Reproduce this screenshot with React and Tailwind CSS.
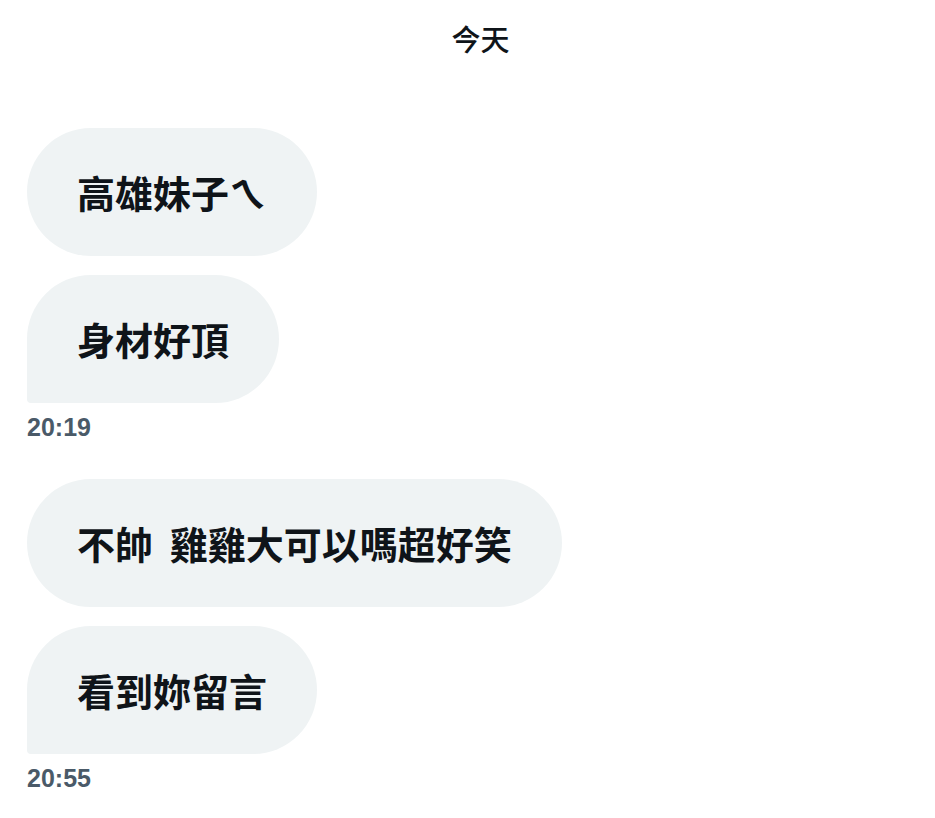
const font = "font-['PingFang_TC','Noto_Sans_CJK_TC',sans-serif]";

function Bubble({ text, last }) {
  return (
    <div className="flex">
      <div
        className={`flex h-[128px] items-center bg-[#eff3f4] px-[50px] text-[38px] font-semibold leading-none text-[#0f1419] [word-spacing:8px] ${
          last ? "rounded-t-[64px] rounded-br-[64px] rounded-bl-[4px]" : "rounded-[64px]"
        }`}
      >
        <span className="whitespace-pre">{text}</span>
      </div>
    </div>
  );
}

function Group({ messages, time }) {
  return (
    <div className="flex flex-col">
      <div className="flex flex-col gap-[19px]">
        {messages.map((m, i) => (
          <Bubble key={i} text={m} last={i === messages.length - 1} />
        ))}
      </div>
      <div className="mt-[9px] font-['Liberation_Sans',sans-serif] text-[25px] font-bold leading-[30px] text-[#4a5a68]">
        {time}
      </div>
    </div>
  );
}

export default function App() {
  return (
    <div className={`min-h-screen bg-white ${font}`}>
      <div className="pl-[26px] pt-[20px] text-center text-[29px] font-medium leading-[36px] text-[#0f1419]">今天</div>
      <div className="mt-[72px] flex flex-col gap-[37px] px-[27px]">
        <Group messages={["高雄妹子ㄟ", "身材好頂"]} time="20:19" />
        <Group messages={["不帥 雞雞大可以嗎超好笑", "看到妳留言"]} time="20:55" />
      </div>
    </div>
  );
}
